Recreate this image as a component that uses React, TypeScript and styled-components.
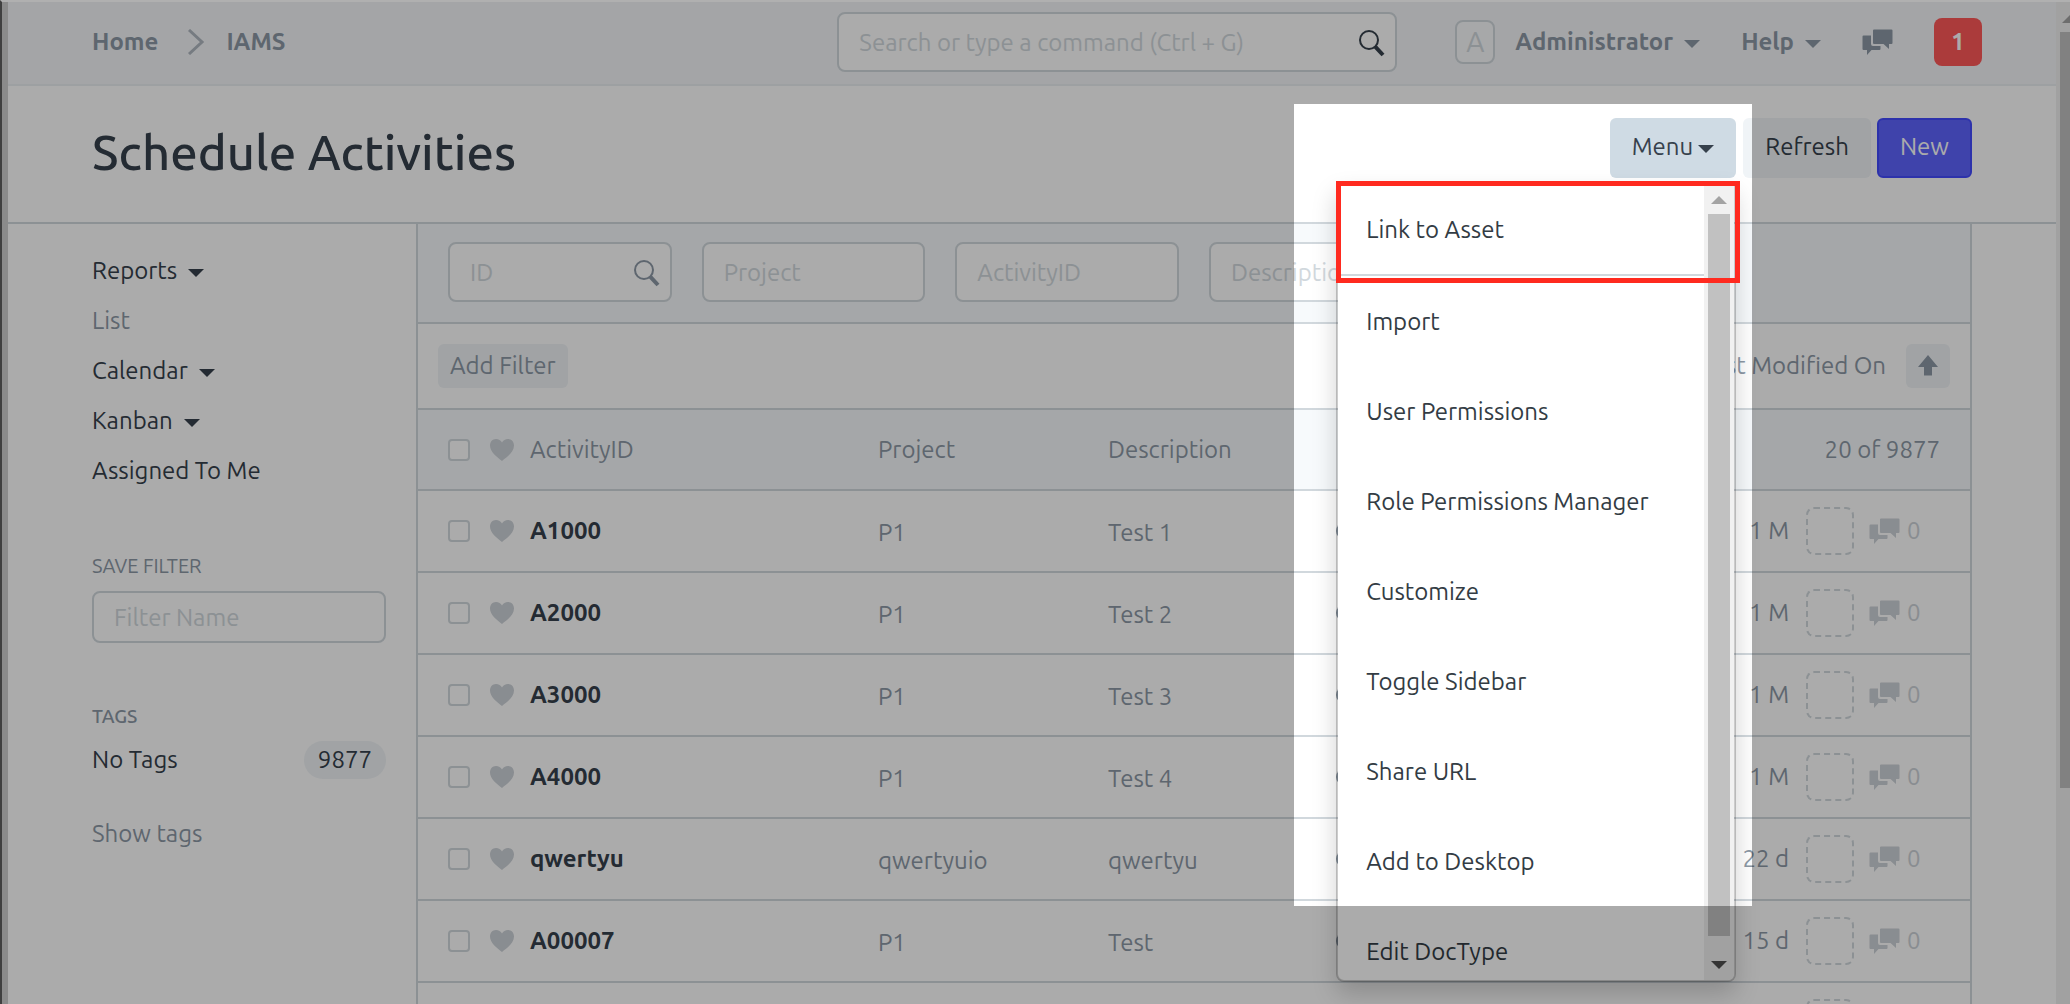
import React from "react";
import styled, { createGlobalStyle, css } from "styled-components";

const color = {
  text: "#36414c",
  muted: "#8d99a6",
  faint: "#d1d8dd",
  border: "#d1d8dd",
  navBg: "#f5f7fa",
  barBg: "#f7fafc",
  chip: "#f0f4f7",
  primary: "#5e64ff",
};

const GlobalStyle = createGlobalStyle`
  *, *::before, *::after { box-sizing: border-box; }
  html, body, #root { height: 100%; }
  body { margin: 0; overflow: hidden; background: #fff; }
  body, button, input {
    font-family: Ubuntu, "Open Sans", "Noto Sans", sans-serif;
    font-size: 24px;
    line-height: 30px;
    color: ${color.text};
  }
  button { cursor: pointer; }
  a { color: inherit; text-decoration: none; }
`;

const Frame = styled.div`
  display: flex;
  height: 100%;
  overflow: hidden;
  border-top: 2px solid #b0b0b0;
  border-left: 2px solid #404040;
`;

const WindowEdge = styled.div`
  flex: 0 0 6px;
  background: #d0d0d0;
`;

const Page = styled.div`
  flex: 1;
  min-width: 0;
  display: flex;
  flex-direction: column;
  background: #fff;
`;

const Navbar = styled.header`
  display: flex;
  align-items: center;
  height: 84px;
  flex-shrink: 0;
  padding: 0 74px 2px 84px;
  background: ${color.navBg};
  border-bottom: 2px solid #ebeff2;
  color: ${color.muted};
  font-weight: 700;
`;

const Breadcrumbs = styled.nav`
  display: flex;
  align-items: center;
  gap: 21px;
`;

const Chevron = styled.svg`
  width: 18px;
  height: 26px;
  margin-left: 8px;
  fill: none;
  stroke: #b0b8c0;
  stroke-width: 3;
`;

const inputBox = css`
  display: flex;
  align-items: center;
  gap: 8px;
  min-width: 0;
  height: 60px;
  padding: 2px 20px 0;
  background: #fff;
  border: 2px solid ${color.border};
  border-radius: 8px;
`;

const NavSearch = styled.label`
  ${inputBox}
  flex: 0 1 560px;
  margin: 0 58px 0 auto;
  padding-right: 10px;
  color: ${color.text};
`;

const FilterBox = styled.label`
  ${inputBox}
  padding-right: 10px;
  color: ${color.muted};
`;

const SaveBox = styled.label`
  ${inputBox}
  height: 52px;
  margin-top: 10px;
`;

const TextInput = styled.input`
  flex: 1;
  width: 100%;
  min-width: 0;
  padding: 0;
  border: 0;
  outline: 0;
  background: transparent;
  &::placeholder { color: ${color.faint}; opacity: 1; }
`;

const SearchSvg = styled.svg<{ $weight: number }>`
  flex: 0 0 28px;
  height: 28px;
  fill: none;
  stroke: currentColor;
  stroke-width: ${(p) => p.$weight};
`;

const NavActions = styled.div`
  display: flex;
  align-items: center;
  gap: 41px;
`;

const plainButton = css`
  padding: 0;
  border: 0;
  background: transparent;
  color: inherit;
  font-weight: inherit;
`;

const NavButton = styled.button`
  ${plainButton}
  display: flex;
  align-items: center;
  gap: 11px;
`;

const Avatar = styled.span`
  display: grid;
  place-items: center;
  width: 40px;
  height: 44px;
  margin-right: 9px;
  border: 2px solid ${color.border};
  border-radius: 8px;
  background: #fafbfc;
  color: ${color.faint};
  font-size: 28px;
  font-weight: 400;
`;

const Caret = styled.span`
  width: 0;
  height: 0;
  margin-top: 4px;
  border: 8px solid transparent;
  border-top-color: currentColor;
  border-bottom: 0;
`;

const ChatSvg = styled.svg<{ $color: string }>`
  flex: none;
  width: 31px;
  height: 27px;
  fill: ${(p) => p.$color};
`;

const Notifications = styled.button`
  width: 48px;
  height: 48px;
  padding: 0;
  border: 0;
  border-radius: 8px;
  background: #ff5858;
  color: #fff;
  font-weight: 700;
`;

const PageHead = styled.div`
  display: flex;
  justify-content: space-between;
  align-items: flex-start;
  height: 138px;
  flex-shrink: 0;
  padding: 32px 84px 0;
  border-bottom: 2px solid ${color.border};
`;

const Title = styled.h1`
  margin: 0;
  font-size: 49px;
  line-height: 68px;
  font-weight: 500;
`;

const HeadActions = styled.div`
  display: flex;
  gap: 6px;
`;

const Button = styled.button<{ $kind?: "open" | "primary" }>`
  display: flex;
  align-items: center;
  gap: 5px;
  height: 60px;
  padding: 0 20px 2px;
  border: 2px solid transparent;
  border-radius: 6px;
  background: ${color.chip};
  background-clip: border-box;
  ${(p) => p.$kind === "open" && css`background: #cfdbe4;`}
  ${(p) =>
    p.$kind === "primary" &&
    css`
      padding: 0 21px 2px;
      background: ${color.primary};
      border-color: #444bff;
      color: #fff;
    `}
`;

const MenuAnchor = styled.div`
  position: relative;
  margin-right: 1px;
`;

const Dropdown = styled.div`
  position: absolute;
  z-index: 10;
  top: 64px;
  right: 0;
  display: flex;
  width: 400px;
  height: 800px;
  overflow: hidden;
  background: #fff;
  background-clip: padding-box;
  border: 2px solid rgba(0, 0, 0, 0.2);
  border-radius: 0 0 8px 8px;
  box-shadow: 0 12px 24px rgba(0, 0, 0, 0.18);
`;

const MenuList = styled.ul`
  flex: 1;
  margin: 0;
  padding: 0;
  list-style: none;
`;

const MenuItem = styled.li<{ $divided?: boolean }>`
  ${(p) => p.$divided && css`border-bottom: 2px solid ${color.border};`}
`;

const MenuLink = styled.a`
  display: block;
  padding: 31px 28px 29px;
  color: #333c44;
`;

const Track = styled.div`
  display: flex;
  flex-direction: column;
  align-items: center;
  flex: 0 0 30px;
  background: #f1f1f1;
`;

const Arrow = styled.span<{ $down?: boolean }>`
  display: grid;
  place-items: center;
  flex: 0 0 ${(p) => (p.$down ? 44 : 30)}px;
  &::before {
    content: "";
    border: 8px solid transparent;
    ${(p) =>
      p.$down
        ? css`border-top-color: #505050; border-bottom: 0; margin-top: 14px;`
        : css`border-bottom-color: #a3a3a3; border-top: 0; margin-top: 2px;`}
  }
`;

const Thumb = styled.span`
  flex: 1;
  width: 22px;
  background: #c1c1c1;
`;

const Spotlight = styled.div`
  position: absolute;
  z-index: 20;
  top: -14px;
  right: -16px;
  width: 458px;
  height: 802px;
  box-shadow: 0 0 0 3000px rgba(0, 0, 0, 0.33);
  pointer-events: none;
`;

const Highlight = styled.div`
  position: absolute;
  z-index: 30;
  top: 63px;
  right: -4px;
  width: 404px;
  height: 102px;
  border: 5px solid #ff2a1f;
  pointer-events: none;
`;

const Body = styled.div`
  flex: 1;
  min-height: 0;
  display: grid;
  grid-template-columns: 324px minmax(0, 1fr);
  padding: 0 84px;
`;

const Sidebar = styled.aside`
  padding: 32px 30px 0 0;
`;

const SideLinks = styled.ul`
  margin: 0;
  padding: 0;
  list-style: none;
`;

const SideLink = styled.li<{ $muted?: boolean }>`
  margin-bottom: 20px;
  color: ${(p) => (p.$muted ? color.muted : color.text)};
`;

const SideButton = styled.button`
  ${plainButton}
  display: flex;
  align-items: center;
  gap: 11px;
`;

const SideHeading = styled.h2<{ $strong?: boolean }>`
  margin: 0;
  color: ${color.muted};
  font-size: 20px;
  line-height: 30px;
  font-weight: 400;
  ${(p) => p.$strong && css`font-size: 19px; font-weight: 500;`}
`;

const SideGroup = styled.section`
  margin-top: 58px;
`;

const SaveGroup = styled.section`
  margin-top: 65px;
`;

const TagRow = styled.div`
  display: flex;
  justify-content: space-between;
  align-items: center;
  height: 38px;
  margin: 10px 0 40px;
`;

const Count = styled.span`
  padding: 4px 14px;
  border-radius: 20px;
  background: ${color.chip};
`;

const ShowTags = styled.a`
  color: ${color.muted};
`;

const Main = styled.main`
  overflow: hidden;
  border: 0 solid ${color.border};
  border-width: 0 2px;
`;

const FilterBar = styled.div`
  display: grid;
  grid-template-columns: repeat(6, minmax(0, 1fr));
  gap: 30px;
  padding: 18px 30px 20px;
  background: ${color.barBg};
  border-bottom: 2px solid ${color.border};
`;

const SortBar = styled.div`
  display: flex;
  justify-content: space-between;
  align-items: center;
  padding: 20px;
  border-bottom: 2px solid ${color.border};
  color: ${color.muted};
`;

const ChipButton = styled.button`
  display: grid;
  place-items: center;
  min-width: 44px;
  height: 44px;
  padding: 0 12px;
  border: 0;
  border-radius: 6px;
  background: ${color.chip};
  color: ${color.muted};
`;

const SortGroup = styled.div`
  display: flex;
  align-items: center;
  gap: 20px;
`;

const ArrowUp = styled.svg`
  width: 20px;
  height: 22px;
  fill: ${color.muted};
`;

const Table = styled.table`
  width: 100%;
  table-layout: fixed;
  border-collapse: collapse;
  color: ${color.muted};
`;

const Col = styled.col<{ $w?: number }>`
  ${(p) => p.$w && css`width: ${p.$w}px;`}
`;

const Row = styled.tr<{ $head?: boolean }>`
  height: ${(p) => (p.$head ? 80 : 82)}px;
  border-bottom: 2px solid ${color.border};
  background: ${(p) => (p.$head ? color.barBg : "transparent")};
`;

const cell = css`
  padding: 0;
  text-align: left;
  font-weight: 400;
  vertical-align: middle;
`;
const Th = styled.th`${cell}`;
const Td = styled.td`${cell}`;
const TextTd = styled.td`
  ${cell}
  padding-top: 4px;
`;

const Subject = styled.div`
  display: flex;
  align-items: center;
  padding-left: 30px;
`;

const Check = styled.input`
  appearance: none;
  width: 22px;
  height: 22px;
  margin: 0 20px 0 0;
  border: 2px solid ${color.border};
  border-radius: 4px;
  background: #fff;
`;

const HeartSvg = styled.svg`
  width: 24px;
  height: 22px;
  margin-right: 16px;
  fill: #cdd2d8;
`;

const Name = styled.a`
  color: ${color.text};
  font-weight: 700;
`;

const Dot = styled.span`
  display: block;
  width: 16px;
  height: 16px;
  border-radius: 50%;
  background: ${color.muted};
`;

const Total = styled.div`
  padding-right: 30px;
  text-align: right;
`;

const Activity = styled.div`
  display: flex;
  justify-content: flex-end;
  align-items: center;
  padding-right: 49px;
`;

const Assignee = styled.button`
  width: 48px;
  height: 48px;
  margin: 0 15px 0 17px;
  padding: 0;
  border: 2px dashed ${color.border};
  border-radius: 8px;
  background: transparent;
`;

const Comments = styled.span`
  display: flex;
  align-items: center;
  gap: 7px;
  min-width: 52px;
  color: #cdd2d8;
`;

const PageScroll = styled.div`
  flex: 0 0 14px;
  padding-left: 4px;
  overflow: hidden;
  background: #f1f1f1;
`;

const PageArrow = styled.div`
  height: 30px;
  padding: 13px 0 0 2px;
  &::before {
    content: "";
    display: block;
    width: 0;
    border: 8px solid transparent;
    border-bottom-color: #a3a3a3;
    border-top: 0;
  }
`;

const PageThumb = styled.div`
  height: 756px;
  background: #c1c1c1;
`;

const SearchIcon = ({ weight = 2 }: { weight?: number }) => (
  <SearchSvg viewBox="0 0 28 28" $weight={weight} aria-hidden>
    <circle cx="12" cy="11" r="9" />
    <path d="M18.2 17.6 26 26" strokeWidth={weight + 2} />
  </SearchSvg>
);

const ChatIcon = ({ fill = color.muted }: { fill?: string }) => (
  <ChatSvg viewBox="0 0 31 27" $color={fill} aria-hidden>
    <path d="M12 .5h17.500a1 1 0 0 1 1 1V14a1 1 0 0 1-1 1H27v5l-5.500-5H12a1 1 0 0 1-1-1V1.500a1 1 0 0 1 1-1z" />
    <path d="M1.500 6.500H9V15a2 2 0 0 0 2 2h7.500v3a1 1 0 0 1-1 1H9.500L5 26v-5H1.500a1 1 0 0 1-1-1V7.500a1 1 0 0 1 1-1z" />
  </ChatSvg>
);

const Heart = () => (
  <HeartSvg viewBox="0 0 24 22" aria-hidden>
    <path d="M12 22C7 18 0 13 0 6.500 0 2.800 2.500 0 6 0c2.600 0 4.800 1.300 6 3.500C13.200 1.300 15.400 0 18 0c3.500 0 6 2.800 6 6.500C24 13 17 18 12 22z" />
  </HeartSvg>
);

const filters = ["ID", "Project", "ActivityID", "Description"];
const menuItems = [
  "Link to Asset",
  "Import",
  "User Permissions",
  "Role Permissions Manager",
  "Customize",
  "Toggle Sidebar",
  "Share URL",
  "Add to Desktop",
  "Edit DocType",
];
const sideLinks = [
  { label: "Reports", menu: true },
  { label: "List", muted: true },
  { label: "Calendar", menu: true },
  { label: "Kanban", menu: true },
  { label: "Assigned To Me" },
];
const rows = [
  { id: "A1000", project: "P1", description: "Test 1", age: "1 M" },
  { id: "A2000", project: "P1", description: "Test 2", age: "1 M" },
  { id: "A3000", project: "P1", description: "Test 3", age: "1 M" },
  { id: "A4000", project: "P1", description: "Test 4", age: "1 M" },
  { id: "qwertyu", project: "qwertyuio", description: "qwertyu", age: "22 d" },
  { id: "A00007", project: "P1", description: "Test", age: "15 d" },
  { id: "", project: "", description: "", age: "" },
];

export default function App() {
  return (
    <>
      <GlobalStyle />
      <Frame>
        <WindowEdge />
        <Page>
          <Navbar>
            <Breadcrumbs>
              <a href="#home">Home</a>
              <Chevron viewBox="0 0 18 26" aria-hidden>
                <path d="M2 1l13 12L2 25" />
              </Chevron>
              <a href="#iams">IAMS</a>
            </Breadcrumbs>
            <NavSearch>
              <TextInput aria-label="Search" placeholder="Search or type a command (Ctrl + G)" />
              <SearchIcon />
            </NavSearch>
            <NavActions>
              <NavButton>
                <Avatar>A</Avatar>
                Administrator
                <Caret />
              </NavButton>
              <NavButton>
                Help
                <Caret />
              </NavButton>
              <NavButton aria-label="Chat">
                <ChatIcon />
              </NavButton>
              <Notifications>1</Notifications>
            </NavActions>
          </Navbar>

          <PageHead>
            <Title>Schedule Activities</Title>
            <HeadActions>
              <MenuAnchor>
                <Button $kind="open" aria-expanded>
                  Menu
                  <Caret />
                </Button>
                <Dropdown>
                  <MenuList>
                    {menuItems.map((item, i) => (
                      <MenuItem key={item} $divided={i === 0}>
                        <MenuLink href="#menu">{item}</MenuLink>
                      </MenuItem>
                    ))}
                  </MenuList>
                  <Track aria-hidden>
                    <Arrow />
                    <Thumb />
                    <Arrow $down />
                  </Track>
                </Dropdown>
                <Spotlight />
                <Highlight />
              </MenuAnchor>
              <Button>Refresh</Button>
              <Button $kind="primary">New</Button>
            </HeadActions>
          </PageHead>

          <Body>
            <Sidebar>
              <SideLinks>
                {sideLinks.map((link) => (
                  <SideLink key={link.label} $muted={link.muted}>
                    {link.menu ? (
                      <SideButton>
                        {link.label}
                        <Caret />
                      </SideButton>
                    ) : (
                      <a href="#view">{link.label}</a>
                    )}
                  </SideLink>
                ))}
              </SideLinks>
              <SaveGroup>
                <SideHeading>SAVE FILTER</SideHeading>
                <SaveBox>
                  <TextInput aria-label="Filter name" placeholder="Filter Name" />
                </SaveBox>
              </SaveGroup>
              <SideGroup>
                <SideHeading $strong>TAGS</SideHeading>
                <TagRow>
                  <a href="#tags">No Tags</a>
                  <Count>9877</Count>
                </TagRow>
                <ShowTags href="#tags">Show tags</ShowTags>
              </SideGroup>
            </Sidebar>

            <Main>
              <FilterBar>
                {filters.map((name, i) => (
                  <FilterBox key={name}>
                    <TextInput aria-label={name} placeholder={name} />
                    {i === 0 && <SearchIcon />}
                  </FilterBox>
                ))}
              </FilterBar>
              <SortBar>
                <ChipButton>Add Filter</ChipButton>
                <SortGroup>
                  Last Modified On
                  <ChipButton aria-label="Sort direction">
                    <ArrowUp viewBox="0 0 20 22" aria-hidden>
                      <path d="M10 0l10 12h-6v8.500H6V12H0z" />
                    </ArrowUp>
                  </ChipButton>
                </SortGroup>
              </SortBar>
              <Table>
                <colgroup>
                  <Col $w={460} />
                  <Col $w={230} />
                  <Col $w={228} />
                  <Col $w={230} />
                  <Col />
                </colgroup>
                <thead>
                  <Row $head>
                    <Th>
                      <Subject>
                        <Check type="checkbox" aria-label="Select all" />
                        <Heart />
                        ActivityID
                      </Subject>
                    </Th>
                    <Th>Project</Th>
                    <Th>Description</Th>
                    <Th />
                    <Th>
                      <Total>20 of 9877</Total>
                    </Th>
                  </Row>
                </thead>
                <tbody>
                  {rows.map((row, i) => (
                    <Row key={i}>
                      <Td>
                        <Subject>
                          <Check type="checkbox" aria-label={`Select ${row.id}`} />
                          <Heart />
                          <Name href="#doc">{row.id}</Name>
                        </Subject>
                      </Td>
                      <TextTd>{row.project}</TextTd>
                      <TextTd>{row.description}</TextTd>
                      <Td>
                        <Dot />
                      </Td>
                      <Td>
                        <Activity>
                          {row.age}
                          <Assignee aria-label="Assign" />
                          <Comments>
                            <ChatIcon fill="#cdd2d8" />
                            {row.id && "0"}
                          </Comments>
                        </Activity>
                      </Td>
                    </Row>
                  ))}
                </tbody>
              </Table>
            </Main>
          </Body>
        </Page>
        <PageScroll aria-hidden>
          <PageArrow />
          <PageThumb />
        </PageScroll>
      </Frame>
    </>
  );
}
